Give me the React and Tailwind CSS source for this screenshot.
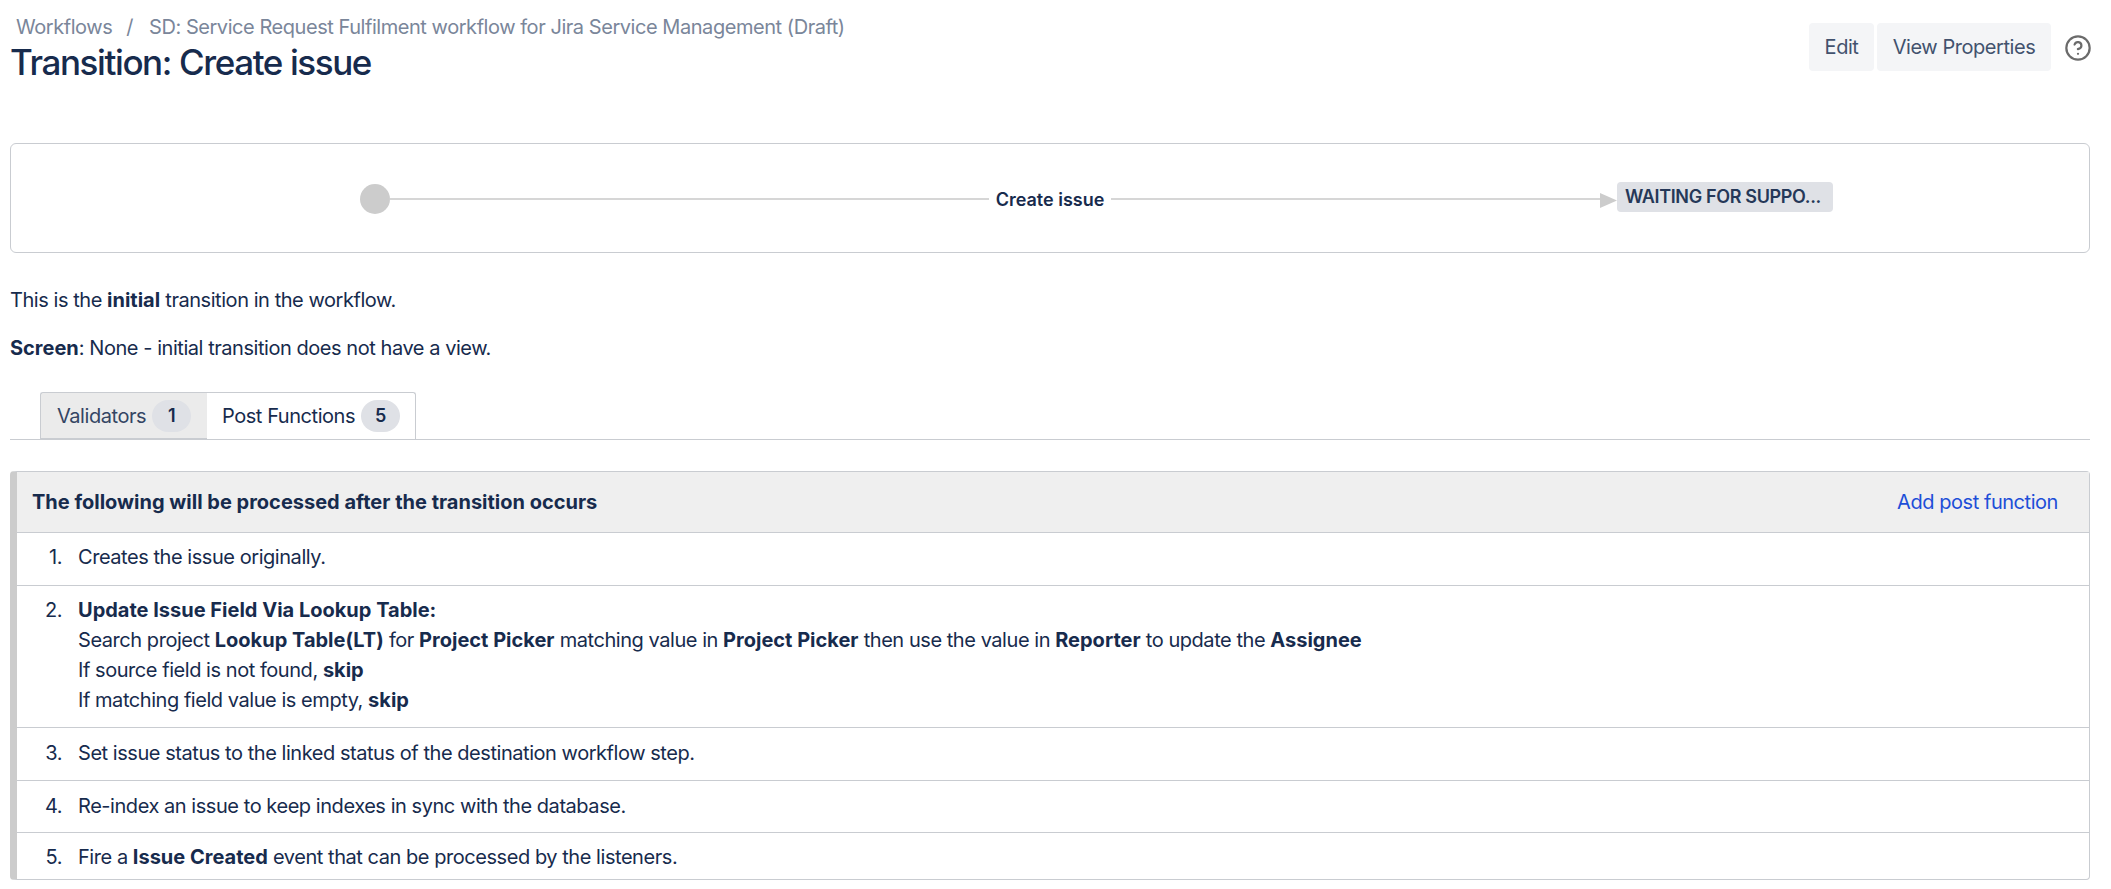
import React from "react";
import { CircleHelp } from "lucide-react";

const B = ({ children }) => <b className="font-bold tracking-normal">{children}</b>;

const Row = ({ n, className, children }) => (
  <div className={`flex border-b border-[#c9ccd1] ${className}`}>
    <span className="w-[45px] text-right shrink-0">{n}.</span>
    <div className="pl-[16px] leading-[30px]">{children}</div>
  </div>
);

const Tab = ({ label, count, active }) => (
  <div
    className={`flex items-center h-[47px] border-t border-[#c9ccd1] ${
      active
        ? "w-[209px] pl-[15px] border-r bg-white text-[#172b4d] mb-[-1px] rounded-tr-[3px]"
        : "w-[167px] pl-[16px] border-l bg-[#ebebeb] text-[#344563] rounded-tl-[3px] border-b"
    }`}
  >
    <span>{label}</span>
    <span className="ml-[6px] flex items-center justify-center w-[39px] h-[32px] rounded-full bg-[#dfe1e6] text-[#172b4d] text-[18px] font-semibold">
      {count}
    </span>
  </div>
);

export default function App() {
  return (
    <div className="h-[889px] overflow-hidden bg-white pl-[10px] pr-[21px] text-[20px] leading-[30px] tracking-[-0.45px] text-[#172b4d] font-['Inter',sans-serif]">
      {/* header */}
      <div className="flex justify-between h-[143px]">
        <div>
          <div className="flex pl-[6px] pt-[12px] h-[30px] text-[#7a869a] leading-[30px]">
            <span>Workflows</span>
            <span className="ml-[14px] mr-[16px]">/</span>
            <span>SD: Service Request Fulfilment workflow for Jira Service Management (Draft)</span>
          </div>
          <h1 className="mt-[10px] text-[35px] leading-[44px] font-medium tracking-[-1.4px]">Transition: Create issue</h1>
        </div>
        <div className="flex items-start pt-[23px]">
          <button className="h-[48px] w-[65px] rounded-[4px] bg-[#f4f5f7] text-[#42526e]">Edit</button>
          <button className="ml-[3px] h-[48px] w-[174px] rounded-[4px] bg-[#f4f5f7] text-[#42526e]">View Properties</button>
          <CircleHelp className="ml-[13px] -mr-[2px] mt-[11px] text-[#6b6b6b]" size={28} strokeWidth={1.9} />
        </div>
      </div>

      {/* transition diagram */}
      <div className="flex items-center h-[110px] pt-[2px] pl-[349px] border border-[#c9ccd1] rounded-[6px]">
        <div className="w-[30px] h-[30px] rounded-full bg-[#cccccc] shrink-0" />
        <div className="w-[599px] h-[2px] bg-[#d6d6d6]" />
        <span className="w-[122px] mt-[2px] text-center text-[18px] tracking-normal font-semibold">Create issue</span>
        <div className="w-[489px] h-[2px] bg-[#d6d6d6]" />
        <svg width="17" height="15" viewBox="0 0 17 15" className="shrink-0 mt-[3px]">
          <path d="M0 0L17 7.5L0 15Z" fill="#cccccc" />
        </svg>
        <div className="flex items-center w-[216px] h-[30px] pl-[8px] mb-[4px] rounded-[4px] bg-[#dfe1e6] text-[18px] tracking-[-0.35px] font-semibold text-[#253858]">
          WAITING FOR SUPPO...
        </div>
      </div>

      <p className="mt-[32px]">
        This is the <B>initial</B> transition in the workflow.
      </p>
      <p className="mt-[18px]">
        <B>Screen</B>: None - initial transition does not have a view.
      </p>

      {/* tabs */}
      <div className="flex mt-[29px] pl-[30px] border-b border-[#c9ccd1]">
        <Tab label="Validators" count="1" />
        <Tab label="Post Functions" count="5" active />
      </div>

      {/* post functions */}
      <div className="mt-[31px] border border-[#c9ccd1] border-l-[7px] border-l-[#cccccc] rounded-[4px]">
        <div className="flex justify-between items-center h-[61px] pl-[15px] pr-[31px] bg-[#efefef] border-b border-[#c9ccd1]">
          <B>The following will be processed after the transition occurs</B>
          <a className="text-[#1d4ed8]">Add post function</a>
        </div>
        <Row n={1} className="pt-[9px] pb-[13px]">Creates the issue originally.</Row>
        <Row n={2} className="pt-[9px] pb-[12px]">
          <B>Update Issue Field Via Lookup Table:</B>
          <br />
          Search project <B>Lookup Table(LT)</B> for <B>Project Picker</B> matching value in{" "}
          <B>Project Picker</B> then use the value in <B>Reporter</B> to update the <B>Assignee</B>
          <br />
          If source field is not found, <B>skip</B>
          <br />
          If matching field value is empty, <B>skip</B>
        </Row>
        <Row n={3} className="pt-[10px] pb-[12px]">Set issue status to the linked status of the destination workflow step.</Row>
        <Row n={4} className="pt-[10px] pb-[11px]">Re-index an issue to keep indexes in sync with the database.</Row>
        <Row n={5} className="pt-[9px] pb-[7px] border-b-0">
          Fire a <B>Issue Created</B> event that can be processed by the listeners.
        </Row>
      </div>
    </div>
  );
}
